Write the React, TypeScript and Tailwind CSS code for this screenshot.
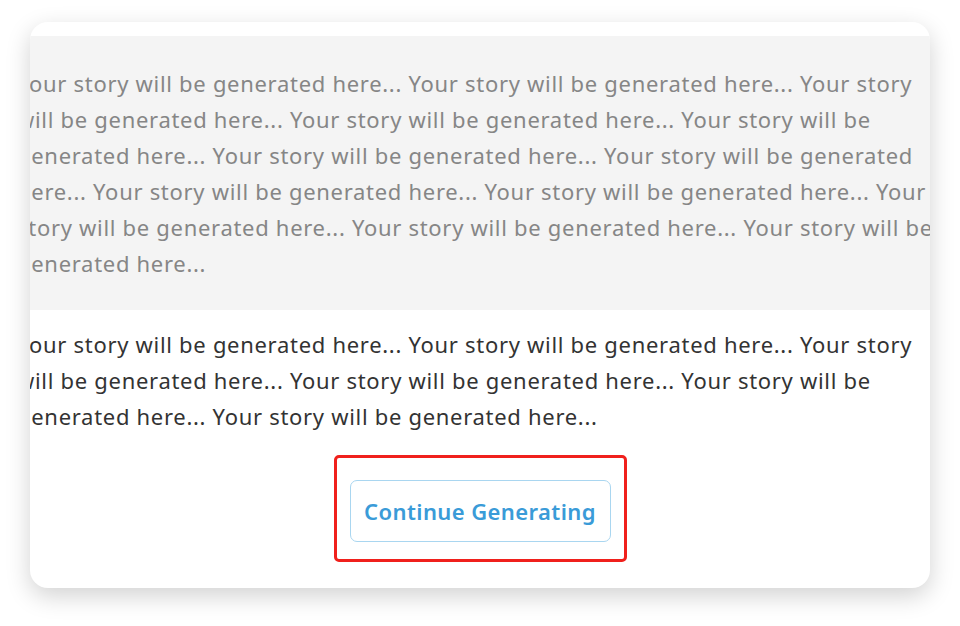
import React from "react";

const story = Array(12).fill("Your story will be generated here...").join(" ");
const story2 = Array(6).fill("Your story will be generated here...").join(" ");

export default function App() {
  return (
    <div className="w-[960px] h-[626px] bg-white pt-[22px] px-[30px]" style={{ fontFamily: '"Noto Sans", sans-serif' }}>
      <div className="h-[566px] bg-white rounded-[18px] overflow-hidden shadow-[0_8px_24px_rgba(0,0,0,0.18)] pt-[14px]">
        <div className="h-[274px] bg-[#f4f4f4] pt-[29px]">
          <p className="ml-[-13px] w-[932px] text-[22px] leading-[36px] tracking-[0.7px] text-[#868686]">{story}</p>
        </div>
        <p className="mt-[16px] ml-[-13px] w-[932px] text-[22px] leading-[36px] tracking-[0.7px] text-[#333333]">{story2}</p>
        <div className="flex justify-center mt-[21px]">
          <div className="border-[3px] border-[#f0201c] rounded-[5px] pt-[22px] pb-[17px] px-[13px]">
            <button className="w-[261px] h-[62px] border border-[#a9d6f0] rounded-[7px] bg-white text-[22px] tracking-[0.4px] font-semibold text-[#3a9bd8]">
              Continue Generating
            </button>
          </div>
        </div>
      </div>
    </div>
  );
}
